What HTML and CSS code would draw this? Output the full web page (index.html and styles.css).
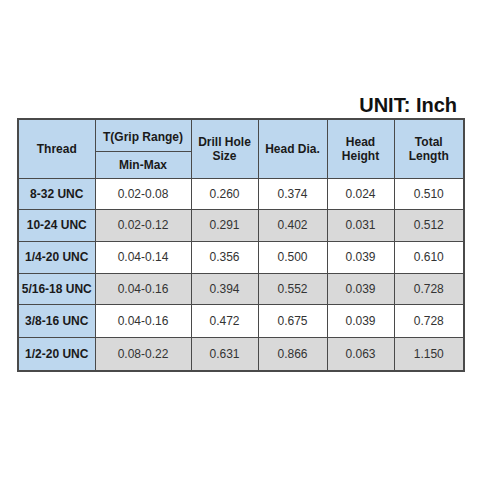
FILE: index.html
```html
<!DOCTYPE html>
<html>
<head>
<meta charset="utf-8">
<link rel="stylesheet" href="styles.css">
</head>
<body>
<div class="page">
  <div class="title">UNIT: Inch</div>
  <table class="spec">
    <colgroup>
      <col class="c1"><col class="c2"><col class="c3"><col class="c4"><col class="c5"><col class="c6">
    </colgroup>
    <thead>
      <tr class="h1">
        <th rowspan="2">Thread</th>
        <th class="grip">T(Grip Range)</th>
        <th rowspan="2">Drill Hole<br>Size</th>
        <th rowspan="2">Head Dia.</th>
        <th rowspan="2">Head<br>Height</th>
        <th rowspan="2">Total<br>Length</th>
      </tr>
      <tr class="h2">
        <th>Min-Max</th>
      </tr>
    </thead>
    <tbody>
      <tr class="r1"><th>8-32 UNC</th><td>0.02-0.08</td><td>0.260</td><td>0.374</td><td>0.024</td><td>0.510</td></tr>
      <tr class="r2 alt"><th>10-24 UNC</th><td>0.02-0.12</td><td>0.291</td><td>0.402</td><td>0.031</td><td>0.512</td></tr>
      <tr class="r3"><th>1/4-20 UNC</th><td>0.04-0.14</td><td>0.356</td><td>0.500</td><td>0.039</td><td>0.610</td></tr>
      <tr class="r4 alt"><th>5/16-18 UNC</th><td>0.04-0.16</td><td>0.394</td><td>0.552</td><td>0.039</td><td>0.728</td></tr>
      <tr class="r5"><th>3/8-16 UNC</th><td>0.04-0.16</td><td>0.472</td><td>0.675</td><td>0.039</td><td>0.728</td></tr>
      <tr class="r6 alt"><th>1/2-20 UNC</th><td>0.08-0.22</td><td>0.631</td><td>0.866</td><td>0.063</td><td>1.150</td></tr>
    </tbody>
  </table>
</div>
</body>
</html>
```
FILE: styles.css
```css
html, body {
  margin: 0;
  padding: 0;
  background: #ffffff;
}
.page {
  width: 480px;
  height: 480px;
  padding-top: 95px;
  box-sizing: border-box;
  font-family: "Liberation Sans", Arial, sans-serif;
  color: #1e1e1e;
}
.title {
  width: 457px;
  text-align: right;
  font-size: 20px;
  line-height: 20px;
  font-weight: bold;
  color: #111;
  margin-bottom: 3px;
}
.spec {
  margin-left: 17px;
  width: 446px;
  table-layout: fixed;
  border-collapse: collapse;
  border: 2px solid #4a4a4a;
}
.c1 { width: 77px; }
.c2 { width: 96px; }
.c3 { width: 67px; }
.c4 { width: 69px; }
.c5 { width: 67px; }
.c6 { width: 70px; }
.spec th, .spec td {
  border: 1.5px solid #4a4a4a;
  padding: 0;
  text-align: center;
  vertical-align: middle;
  font-size: 12px;
  line-height: 14px;
}
.spec th {
  background: #bdd7ee;
  font-weight: bold;
  color: #1a1a1a;
}
.spec th.grip {
  padding-top: 3px;
}
.spec td {
  color: #333;
}
.spec tr.alt td {
  background: #d9d9d9;
}
.h1 { height: 32px; }
.h2 { height: 27px; }
.r1 { height: 31px; }
.r2 { height: 32px; }
.r3 { height: 32px; }
.r4 { height: 31px; }
.r5 { height: 33px; }
.r6 { height: 34px; }
```
